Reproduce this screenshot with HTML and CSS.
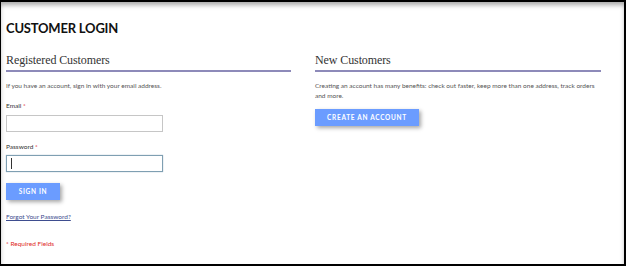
FILE: index.html
```html
<!DOCTYPE html>
<html lang="en">
<head>
  <meta charset="UTF-8" />
  <meta name="viewport" content="width=device-width, initial-scale=1.0"/>
  <title>Customer Login</title>
  <link rel="stylesheet" href="styles.css">
</head>
<body>

<div class="frame">
  <h1 class="page-title">CUSTOMER LOGIN</h1>

  <div class="columns">
    <div class="block">
      <h2 class="block-title">Registered Customers</h2>
      <p class="note intro">If you have an account, sign in with your email address.</p>

      <form class="login-form">
        <label class="field-label label-email">Email <span class="req">*</span></label>
        <input type="text" class="field field-email" />

        <label class="field-label label-pass">Password <span class="req">*</span></label>
        <div class="field-wrap">
          <input type="password" class="field field-pass" />
          <span class="caret"></span>
        </div>

        <button type="button" class="btn btn-signin">SIGN IN</button>
      </form>

      <a href="#" class="forgot">Forgot Your Password?</a>
      <p class="required">* Required Fields</p>
    </div>

    <div class="block">
      <h2 class="block-title">New Customers</h2>
      <p class="note benefits">Creating an account has many benefits: check out faster, keep more than one address, track orders and more.</p>
      <button type="button" class="btn btn-create">CREATE AN ACCOUNT</button>
    </div>
  </div>
</div>

</body>
</html>
```

FILE: styles.css
```css
body {
  margin: 0;
  background: #fff;
  font-family: Lato, "Open Sans", sans-serif;
  color: #333;
}
.frame {
  box-sizing: border-box;
  width: 626px;
  height: 266px;
  border: 2px solid #000;
  border-left-width: 1px;
  box-shadow: inset 0 4px 5px -1px rgba(0,0,0,0.35);
  padding-left: 5px;
  overflow: hidden;
}
.page-title {
  margin: 18px 0 0;
  font-size: 13px;
  line-height: 17px;
  font-weight: 700;
  color: #111;
  letter-spacing: -0.2px;
}
.columns {
  display: flex;
  gap: 24px;
}
.block {
  width: 285px;
  flex: none;
}
.block + .block {
  width: 286px;
}
.block-title {
  margin: 15px 0 0;
  padding-bottom: 2px;
  border-bottom: 2px solid #8d8ab9;
  font-family: "Liberation Serif", serif;
  font-weight: 400;
  font-size: 12px;
  line-height: 16px;
  color: #333;
  letter-spacing: -0.1px;
}
.note {
  margin: 0;
  font-size: 6.5px;
  line-height: 10px;
  color: #555;
}
.intro {
  margin-top: 9px;
}
.benefits {
  margin-top: 9px;
}
.login-form {
  display: flex;
  flex-direction: column;
  align-items: flex-start;
}
.field-label {
  font-size: 6.5px;
  line-height: 10px;
  color: #333;
}
.label-email {
  margin-top: 10px;
}
.label-pass {
  margin-top: 10px;
}
.req {
  color: #e02b27;
}
.field {
  display: block;
  box-sizing: border-box;
  width: 157px;
  height: 17px;
  margin: 0;
  padding: 0 4px;
  border: 1px solid #c6c6c6;
  background: #fff;
  outline: none;
}
.field-email {
  margin-top: 4px;
}
.field-wrap {
  position: relative;
  margin-top: 3px;
}
.field-pass {
  border-color: #7f9fb2;
  box-shadow: 0 0 1px 0 #9ab4c4;
}
.caret {
  position: absolute;
  left: 5px;
  top: 3px;
  width: 1px;
  height: 11px;
  background: #333;
}
.btn {
  box-sizing: border-box;
  height: 17px;
  padding: 0;
  border: none;
  background: #6b9cff;
  color: #fff;
  font-family: Lato, sans-serif;
  font-weight: 700;
  font-size: 6.5px;
  letter-spacing: 0.7px;
  box-shadow: 2px 2px 4px rgba(0,0,0,0.35);
  cursor: pointer;
}
.btn-signin {
  width: 54px;
  margin-top: 11px;
}
.btn-create {
  display: block;
  width: 104px;
  margin-top: 8px;
}
.forgot {
  display: block;
  margin-top: 12px;
  font-size: 6.5px;
  line-height: 10px;
  color: #3e4d8f;
  text-decoration: underline;
}
.required {
  margin: 17px 0 0;
  font-size: 6.5px;
  line-height: 10px;
  color: #e02b27;
}
```
